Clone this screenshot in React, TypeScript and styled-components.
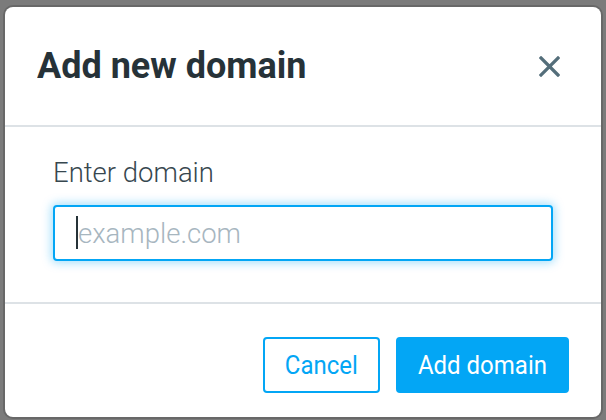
import React from "react";
import styled, { createGlobalStyle } from "styled-components";

const GlobalStyle = createGlobalStyle`
  html, body {
    margin: 0;
    padding: 0;
    background: #7b7b7b;
    font-family: Roboto, "Liberation Sans", Arial, sans-serif;
  }
  * { box-sizing: border-box; }
`;

const Backdrop = styled.div`
  width: 606px;
  height: 420px;
  padding: 7px 5px 3px 5px;
  background: #7b7b7b;
`;

const Modal = styled.div`
  width: 596px;
  height: 410px;
  background: #ffffff;
  border-radius: 8px;
  box-shadow: 0 0 0 2px #686868;
  display: flex;
  flex-direction: column;
  overflow: hidden;
`;

const Header = styled.header`
  height: 120px;
  flex: 0 0 auto;
  display: flex;
  align-items: center;
  justify-content: space-between;
  padding: 0 32px 0 32px;
  border-bottom: 2px solid #dde2e6;
`;

const Title = styled.h2`
  margin: 0;
  font-family: Roboto, "Liberation Sans", sans-serif;
  font-weight: 700;
  font-size: 36px;
  line-height: 1;
  color: #263238;
  transform: scaleY(1.04);
`;

const CloseButton = styled.button`
  width: 40px;
  height: 40px;
  padding: 0;
  border: none;
  background: transparent;
  display: flex;
  align-items: center;
  justify-content: center;
  cursor: pointer;
`;

const Body = styled.div`
  flex: 1 1 auto;
  padding: 29px 48px 0 48px;
  border-bottom: 2px solid #dde2e6;
  display: flex;
  flex-direction: column;
`;

const Label = styled.label`
  font-family: Roboto, "Liberation Sans", sans-serif;
  font-size: 27.5px;
  font-weight: 300;
  line-height: 34px;
  color: #37474f;
  margin-bottom: 15px;
`;

const InputWrap = styled.div`
  position: relative;
  width: 500px;
  height: 56px;
`;

const Input = styled.input`
  width: 100%;
  height: 100%;
  border: 2px solid #03a6f5;
  border-radius: 4px;
  padding: 0 0 0 23px;
  font-family: Roboto, "Liberation Sans", sans-serif;
  font-size: 27.5px;
  font-weight: 300;
  color: #263238;
  caret-color: transparent;
  outline: none;
  box-shadow: 0 0 10px 2px rgba(3, 166, 245, 0.35);
  &::placeholder {
    color: #a7b6bf;
  }
`;

const Caret = styled.span`
  position: absolute;
  left: 23px;
  top: 11px;
  width: 2px;
  height: 33px;
  background: #263238;
  pointer-events: none;
`;

const Footer = styled.footer`
  flex: 0 0 113px;
  display: flex;
  justify-content: flex-end;
  align-items: flex-start;
  gap: 16px;
  padding: 33px 32px 0 0;
`;

const Button = styled.button<{ $primary?: boolean }>`
  height: 56px;
  padding: 0 20px;
  border-radius: 4px;
  border: 2px solid #03a6f5;
  background: ${(p) => (p.$primary ? "#03a6f5" : "#ffffff")};
  color: ${(p) => (p.$primary ? "#ffffff" : "#03a6f5")};
  font-family: Roboto, "Liberation Sans", sans-serif;
  font-size: 24px;
  font-weight: 400;
  cursor: pointer;
  span {
    display: inline-block;
    transform: scaleY(1.1);
  }
`;

export default function App() {
  return (
    <>
      <GlobalStyle />
      <Backdrop>
        <Modal role="dialog" aria-labelledby="dlg-title">
          <Header>
            <Title id="dlg-title">Add new domain</Title>
            <CloseButton aria-label="Close">
              <svg width="21" height="21" viewBox="0 0 21 21">
                <path
                  d="M2 2 L19 19 M19 2 L2 19"
                  stroke="#546e7a"
                  strokeWidth="3.2"
                  strokeLinecap="square"
                />
              </svg>
            </CloseButton>
          </Header>
          <Body>
            <Label htmlFor="domain">Enter domain</Label>
            <InputWrap>
              <Input id="domain" placeholder="example.com" />
              <Caret />
            </InputWrap>
          </Body>
          <Footer>
            <Button>
              <span>Cancel</span>
            </Button>
            <Button $primary>
              <span>Add domain</span>
            </Button>
          </Footer>
        </Modal>
      </Backdrop>
    </>
  );
}
